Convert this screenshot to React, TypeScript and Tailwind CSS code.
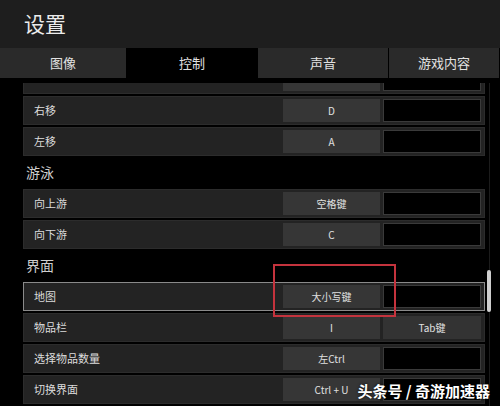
const FONT = { fontFamily: '"Noto Sans CJK SC", "Noto Sans", sans-serif' }

type Row = { label: string; k1: string; k2?: string; active?: boolean }

function BindRow({ label, k1, k2, active }: Row) {
  return (
    <div
      className={`h-[29px] flex items-stretch py-[2px] pr-[3px] bg-[#232323] border ${
        active ? "border-[#8a8a8a]" : "border-[#2c2c2c]"
      }`}
    >
      <div className="flex-1 flex items-center pl-[10px] text-[11px] text-[#dcdcdc]">{label}</div>
      <div className="w-[97px] flex items-center justify-center bg-[#363636] text-[10px] text-[#e0e0e0]">{k1}</div>
      <div
        className={`w-[98px] ml-[3px] flex items-center justify-center text-[10px] text-[#e0e0e0] border ${
          k2 ? "bg-[#333333] border-[#333333]" : "bg-black border-[#3a3a3a]"
        }`}
      >
        {k2}
      </div>
    </div>
  )
}

function Heading({ text }: { text: string }) {
  return <div className="h-[29px] flex items-center pl-[3px] text-[14px] text-[#cfcfcf]">{text}</div>
}

export default function App() {
  const tabs = [
    { name: "图像", w: "w-[127px]" },
    { name: "控制", w: "w-[131px]", active: true },
    { name: "声音", w: "w-[131px]" },
    { name: "游戏内容", w: "flex-1" },
  ]

  return (
    <div className="w-[500px] h-[406px] bg-black overflow-hidden relative flex flex-col" style={FONT}>
      {/* header */}
      <div className="h-[48px] shrink-0 bg-[#1e1e1e] flex items-center pl-[24px] text-[21px] text-[#ececec]">设置</div>

      {/* tabs */}
      <div className="h-[30px] shrink-0 flex bg-black">
        {tabs.map((t) => (
          <div
            key={t.name}
            className={`${t.w} flex items-center justify-center text-[13px] text-[#e2e2e2] border-r border-black ${
              t.active ? "bg-black" : "bg-[#2a2a2a]"
            }`}
          >
            {t.name}
          </div>
        ))}
      </div>

      {/* list */}
      <div className="flex-1 mt-[5px] overflow-hidden relative">
        <div className="-mt-[18px] pl-[23px] pr-[15px] flex flex-col gap-[2px]">
          <BindRow label="" k1="" />
          <BindRow label="右移" k1="D" />
          <BindRow label="左移" k1="A" />
          <Heading text="游泳" />
          <BindRow label="向上游" k1="空格键" />
          <BindRow label="向下游" k1="C" />
          <Heading text="界面" />
          <BindRow label="地图" k1="大小写键" active />
          <BindRow label="物品栏" k1="I" k2="Tab键" />
          <BindRow label="选择物品数量" k1="左Ctrl" />
          <BindRow label="切换界面" k1="Ctrl + U" />
          <BindRow label="" k1="" />
        </div>

        {/* scrollbar */}
        <div className="absolute left-[489px] top-0 bottom-0 w-px bg-[#1c1c1c]" />
        <div className="absolute left-[487px] top-[187px] w-[4px] h-[42px] rounded-sm bg-[#cfcfcf]" />
      </div>

      {/* red highlight box */}
      <div className="absolute left-[273px] top-[264px] w-[123px] h-[53px] border-2 border-[#c4333d]" />

      {/* watermark */}
      <div
        className="absolute right-[10px] bottom-[5px] text-[15px] leading-[20px] font-bold text-white"
        style={{ textShadow: "0 0 3px rgba(0,0,0,0.9)" }}
      >
        头条号 / 奇游加速器
      </div>
    </div>
  )
}
